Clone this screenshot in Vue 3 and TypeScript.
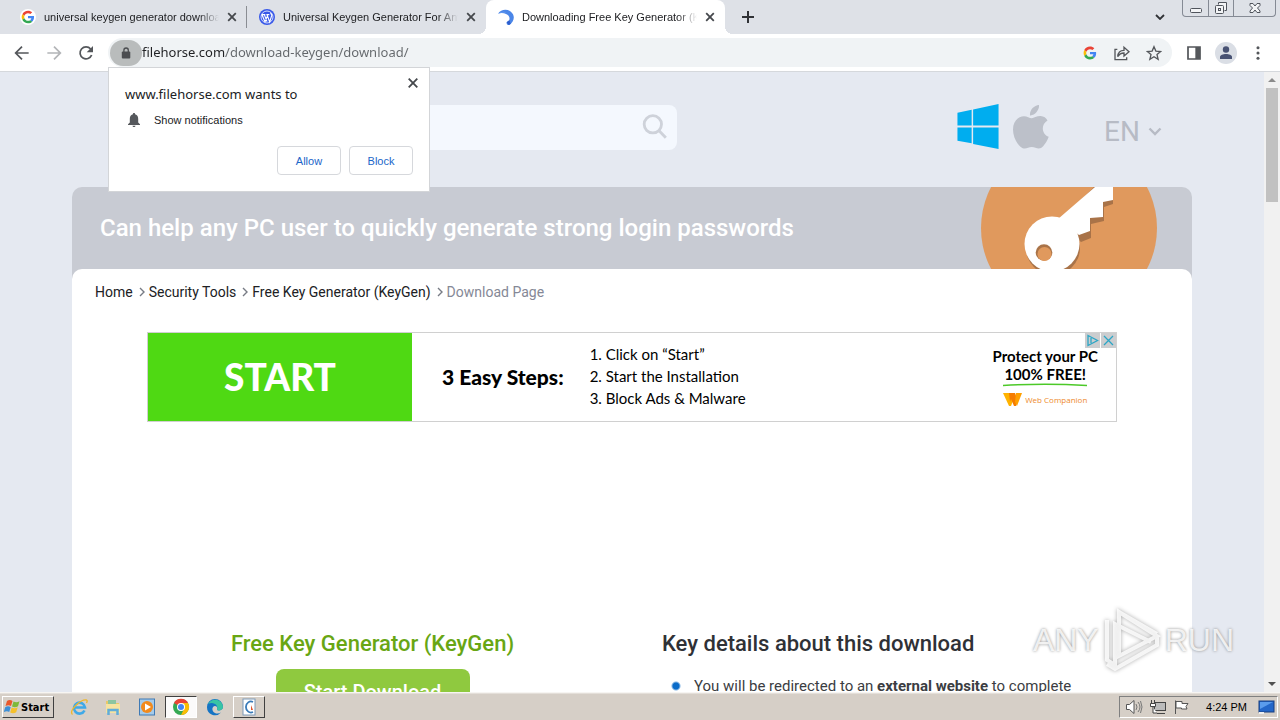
<script setup lang="ts">
import { ref } from 'vue'

interface Tab {
  title: string
  icon: 'google' | 'wordpress' | 'horse'
  active: boolean
}

const tabs: Tab[] = [
  { title: 'universal keygen generator download', icon: 'google', active: false },
  { title: 'Universal Keygen Generator For Any', icon: 'wordpress', active: false },
  { title: 'Downloading Free Key Generator (KeyGen)', icon: 'horse', active: true },
]

const crumbs: string[] = ['Home', 'Security Tools', 'Free Key Generator (KeyGen)']
const steps: string[] = ['1. Click on “Start”', '2. Start the Installation', '3. Block Ads & Malware']
const url = ref<string>('filehorse.com/download-keygen/download/')
const query = ref<string>('')
</script>

<template>
  <div class="desktop">
    <header class="tabstrip">
      <div v-for="tab in tabs" :key="tab.title" class="tab" :class="{ active: tab.active }">
        <svg v-if="tab.icon === 'google'" class="fav" viewBox="0 0 48 48" aria-hidden="true">
          <circle cx="24" cy="24" r="24" fill="#fff" />
          <g transform="translate(5 5) scale(.79)">
            <path fill="#ea4335" d="M24 9.5c3.5 0 6.700 1.200 9.200 3.600l6.900-6.900C35.900 2.400 30.500 0 24 0 14.600 0 6.500 5.400 2.600 13.200l8 6.200C12.400 13.700 17.700 9.500 24 9.500z" />
            <path fill="#4285f4" d="M47 24.500c0-1.600-.2-3.100-.4-4.500H24v9h12.900c-.6 3-2.300 5.500-4.800 7.200l7.700 6C44.400 38 47 31.800 47 24.500z" />
            <path fill="#fbbc05" d="M10.500 28.600c-.5-1.500-.8-3-.8-4.600s.3-3.100.8-4.600l-8-6.200C.9 16.500 0 20.100 0 24s.9 7.500 2.600 10.800z" />
            <path fill="#34a853" d="M24 48c6.500 0 11.900-2.100 15.900-5.800l-7.700-6c-2.200 1.500-4.900 2.300-8.200 2.300-6.300 0-11.600-4.200-13.500-9.900l-8 6.200C6.500 42.600 14.600 48 24 48z" />
          </g>
        </svg>
        <svg v-else-if="tab.icon === 'wordpress'" class="fav" viewBox="0 0 24 24" aria-hidden="true">
          <circle cx="12" cy="12" r="12" fill="#3858e9" />
          <circle cx="12" cy="12" r="9" fill="none" stroke="#fff" stroke-width="1.200" />
          <path d="M4.500 8.500l4.500 11M8 8.500l4 10.500M9 19.500l3-8M12 8.500l4 11 3-9.500c.4-2-1.500-2.500-1.500-4.500M4 8.500h5.500M11 8.500h4.500" fill="none" stroke="#fff" stroke-width="1.700" />
        </svg>
        <svg v-else class="fav" viewBox="0 0 24 24" aria-hidden="true">
          <path d="M0 7C5-1 18-1 22.500 8c3 6 0 12-5 16-3 .5-5-1-4.500-4 .6-2 3-1.500 4-4 1-4-1-7-5-8.500-3-1.500-7-2.500-12-.5z" fill="#4b86e8" />
          <path d="M1 7c3-3 8-4 12-2-4-.5-8 0-12 2z" fill="#7fb0f6" />
          <path d="M13 20l4-3 2 5-3 2z" fill="#2d5dcc" />
        </svg>
        <span class="tab-title">{{ tab.title }}</span>
        <button class="tab-close" aria-label="Close tab">
          <svg viewBox="0 0 10 10"><path d="M1.200 1.200l7.600 7.600M8.800 1.200L1.200 8.800" /></svg>
        </button>
      </div>
      <button class="new-tab" aria-label="New tab">
        <svg viewBox="0 0 12 12"><path d="M6 0v12M0 6h12" /></svg>
      </button>
      <div class="strip-space"></div>
      <button class="tab-search" aria-label="Search tabs">
        <svg viewBox="0 0 10 6"><path d="M1 1l4 4 4-4" /></svg>
      </button>
      <div class="win-controls">
        <button aria-label="Minimize">
          <svg viewBox="0 0 24 16"><rect x="6.500" y="8.500" width="11" height="4" rx="1" /></svg>
        </button>
        <button aria-label="Restore">
          <svg viewBox="0 0 24 16"><path d="M9.500 4.500v-2h8v8h-2" /><rect x="6.500" y="5.500" width="8" height="8" rx="1" /><rect x="9.500" y="8.500" width="2" height="2" /></svg>
        </button>
        <button class="wide" aria-label="Close window">
          <svg viewBox="0 0 24 16"><path d="M7 3.500h3l2 2.500 2-2.500h3v2L14.500 8l2.500 3v1.500h-3L12 10l-2 2.500H7V11l2.500-3L7 5.500z" /></svg>
        </button>
      </div>
    </header>

    <div class="toolbar">
      <button class="tool" aria-label="Back">
        <svg viewBox="0 0 24 24"><path d="M22 12H3M12 2.500L2.500 12l9.500 9.500" class="ln" /></svg>
      </button>
      <button class="tool faded" aria-label="Forward">
        <svg viewBox="0 0 24 24"><path d="M2 12h19M12 2.500l9.500 9.500-9.500 9.500" class="ln" /></svg>
      </button>
      <button class="tool" aria-label="Reload">
        <svg viewBox="0 0 24 24"><path d="M20.500 15a9 9 0 1 1-1.500-9" class="ln" /><path d="M22.500 1.500v9.500H13z" fill="currentColor" /></svg>
      </button>
      <div class="omnibox">
        <button class="lock" aria-label="Site information">
          <svg viewBox="0 0 10 12"><rect x=".8" y="4.500" width="8.500" height="7" rx="1" fill="#4b4d50" /><path d="M2.900 5V3.200a2.200 2.200 0 0 1 4.400 0V5" fill="none" stroke="#4b4d50" stroke-width="1.300" /></svg>
        </button>
        <input v-model="url" class="url" type="text" aria-label="Address" spellcheck="false" />
        <button class="tool" aria-label="Google">
          <svg viewBox="-6 -6 60 60">
            <path fill="#ea4335" d="M24 9.500c3.500 0 6.700 1.200 9.200 3.600l6.900-6.900C35.900 2.400 30.500 0 24 0 14.600 0 6.500 5.400 2.600 13.200l8 6.200C12.400 13.700 17.700 9.500 24 9.500z" />
            <path fill="#4285f4" d="M47 24.500c0-1.600-.2-3.100-.4-4.500H24v9h12.900c-.6 3-2.300 5.500-4.800 7.200l7.700 6C44.400 38 47 31.800 47 24.500z" />
            <path fill="#fbbc05" d="M10.500 28.600c-.5-1.500-.8-3-.8-4.600s.3-3.100.8-4.600l-8-6.200C.9 16.500 0 20.100 0 24s.9 7.500 2.600 10.800z" />
            <path fill="#34a853" d="M24 48c6.500 0 11.900-2.100 15.900-5.800l-7.700-6c-2.200 1.500-4.900 2.300-8.200 2.300-6.300 0-11.600-4.200-13.500-9.900l-8 6.200C6.500 42.600 14.600 48 24 48z" />
          </svg>
        </button>
        <button class="tool" aria-label="Share">
          <svg viewBox="0 0 24 24"><path d="M5 6.500H1.500V22H19v-3.500M5.500 17.500c.5-7 4-9.500 9.500-9.500V3.500l7.500 6.500-7.500 6.500V12c-4 0-7 1.500-9.500 5.500z" class="ln thin" /></svg>
        </button>
        <button class="tool" aria-label="Bookmark">
          <svg viewBox="0 0 24 24"><path d="M12 2.500l2.800 6.600 7.200.6-5.500 4.700 1.700 7-6.200-3.700-6.200 3.700 1.700-7L2 9.700l7.200-.6z" class="ln thin" /></svg>
        </button>
      </div>
      <button class="tool" aria-label="Side panel">
        <svg viewBox="0 0 24 24"><path d="M3 3h18v18H3z" class="ln" /><path d="M14 3h7v18h-7z" fill="currentColor" /></svg>
      </button>
      <button class="tool" aria-label="Profile">
        <svg class="avatar" viewBox="0 0 22 22"><circle cx="11" cy="11" r="11" fill="#dadee5" /><circle cx="11" cy="7.500" r="3.200" fill="#485273" /><path d="M5 17v-2c0-4 12-4 12 0v2z" fill="#485273" /></svg>
      </button>
      <button class="tool" aria-label="Menu">
        <svg viewBox="0 0 24 24"><g fill="currentColor"><circle cx="12" cy="4" r="2.300" /><circle cx="12" cy="12" r="2.300" /><circle cx="12" cy="20" r="2.300" /></g></svg>
      </button>
    </div>

    <section class="prompt" role="dialog" aria-label="Permission request">
      <button class="prompt-close" aria-label="Dismiss">
        <svg viewBox="0 0 10 10"><path d="M.7.7l8.600 8.600M9.300.7L.7 9.300" /></svg>
      </button>
      <h2>www.filehorse.com wants to</h2>
      <p>
        <svg viewBox="0 0 12 14" aria-hidden="true"><path d="M6 0c.8 0 1.100.5 1.100 1.200C9.500 1.800 10.200 4 10.200 6v3.500L12 11.300v.7H0v-.7l1.800-1.800V6c0-2 .7-4.200 3.100-4.800C4.900.5 5.200 0 6 0zM4.500 12.700h3c0 1.700-3 1.700-3 0z" fill="#55585c" /></svg>
        Show notifications
      </p>
      <div class="prompt-actions">
        <button>Allow</button>
        <button>Block</button>
      </div>
    </section>

    <div class="viewport">
      <main class="page">
        <div class="site">
          <div class="site-head">
            <form class="search" @submit.prevent>
              <input v-model="query" type="search" aria-label="Search" />
              <button aria-label="Search">
                <svg viewBox="0 0 24 24"><circle cx="10" cy="9.500" r="8" /><path d="M15.800 15.500L22 22" /></svg>
              </button>
            </form>
            <nav class="platforms" aria-label="Platforms">
              <a href="#windows" aria-label="Windows">
                <svg class="windows" viewBox="0 0 42 46"><path fill="#00adef" d="M0 9l14.500-3v16H0zM16 5.700L42 0v22H16zM0 24h14.500v16.200L0 37.500zM16 24h26v22l-26-5z" /></svg>
              </a>
              <a href="#mac" aria-label="Mac">
                <svg class="apple" viewBox="0 0 36 44"><path fill="#bcc0c9" d="M26 0c.3 3-1 5.500-2.600 7.300C21.800 9.100 19.500 10.600 17 10.400c-.3-2.900 1-5.500 2.600-7.300C21.200 1.400 23.800.2 26 0zM34.500 15.500c-7 4.300-5.800 13.500 1.200 16.300-1.300 4-4.900 9.800-7.700 11.300-3.400 1.400-5.800-1.100-9.300-1.100s-5.500 2.500-9 1.200C4 40.500 0 31.500 0 24.500 0 16 5.500 11.200 11 11.200c3.200 0 5.500 2 7.700 2 2.100 0 5.300-2.400 9-2.200 3 .2 5.500 1.800 6.800 4.500z" /></svg>
              </a>
            </nav>
            <button class="lang">EN <svg viewBox="0 0 14 9"><path d="M1.500 1.500L7 7l5.500-5.500" /></svg></button>
          </div>

          <div class="hero">
            <h1>Can help any PC user to quickly generate strong login passwords</h1>
            <svg class="key" viewBox="0 0 176 82" aria-hidden="true">
              <circle cx="88" cy="41" r="88" fill="#e0995d" />
              <g fill="#a97348">
                <path d="M78 35L115-2h17v19l-9 3v14l-13 3v14l-10 4z" />
                <circle cx="72" cy="61" r="27" />
              </g>
              <path fill="#fff" d="M77 32L114 0h18v13l-10 2v15l-13 1v13l-11 4z" />
              <circle cx="71" cy="57" r="27.500" fill="#fff" />
              <circle cx="63" cy="65.500" r="8.300" fill="#a97348" />
              <circle cx="63.500" cy="67" r="7" fill="#e0995d" />
            </svg>
          </div>

          <div class="card">
            <nav class="crumbs" aria-label="Breadcrumb">
              <template v-for="crumb in crumbs" :key="crumb">
                <a href="#crumb">{{ crumb }}</a>
                <svg viewBox="0 0 6 10" aria-hidden="true"><path d="M1 1l4 4-4 4" /></svg>
              </template>
              <span>Download Page</span>
            </nav>

            <aside class="ad">
              <a class="ad-start" href="#start">START</a>
              <strong class="ad-lead">3 Easy Steps:</strong>
              <ul>
                <li v-for="step in steps" :key="step">{{ step }}</li>
              </ul>
              <div class="ad-brand">
                <b>Protect your PC</b>
                <b>100% FREE!</b>
                <svg class="swash" viewBox="0 0 84 4" aria-hidden="true"><path d="M0 2.500Q42 0 84 2.500" fill="none" stroke="#4cc928" stroke-width="1.500" /></svg>
                <span class="wc">
                  <svg viewBox="0 0 19 14" aria-hidden="true"><path fill="#ffb300" d="M0 0h9l2 5-3 8H6z" /><path fill="#f57c00" d="M6 0h6l3 8-2 5h-2L8 6 7 9z" /><path fill="#ffa000" d="M13 0h6l-5 13-2-4z" /></svg>
                  Web Companion
                </span>
              </div>
              <div class="ad-tools">
                <button aria-label="Ad choices"><svg viewBox="0 0 15 15"><path d="M3 2.500l9.500 5L3 12.500zM6 5v5" /></svg></button>
                <button aria-label="Close ad"><svg viewBox="0 0 15 15"><path d="M3 3l9 9M12 3l-9 9" /></svg></button>
              </div>
            </aside>

            <div class="columns">
              <section class="get">
                <h2>Free Key Generator (KeyGen)</h2>
                <button>Start Download</button>
              </section>
              <section class="details">
                <h2>Key details about this download</h2>
                <ul>
                  <li>You will be redirected to an <b>external website</b> to complete</li>
                </ul>
              </section>
            </div>
          </div>
        </div>
      </main>
      <div class="scrollbar" aria-hidden="true">
        <svg viewBox="0 0 16 16"><path d="M4 10l4-4 4 4z" fill="#8b8b8b" /></svg>
        <div class="thumb"></div>
        <svg viewBox="0 0 16 16"><path d="M4 6l4 4 4-4z" fill="#505050" /></svg>
      </div>
      <div class="watermark">
        <span>ANY</span>
        <svg viewBox="0 0 58 64" aria-hidden="true"><path d="M4 12v40l8 5V16l36 18M16 4v44l38-20zM4 56l8 5 42-24v-8M16 4l38 22" /></svg>
        <span>RUN</span>
      </div>
    </div>

    <footer class="taskbar">
      <button class="start">
        <svg viewBox="0 0 16 16" aria-hidden="true"><path fill="#e9582b" d="M3 2c2-1.500 4-1 5.500 0L7 7C5.500 6 3.500 6 1.500 7z" /><path fill="#7db93a" d="M9.500 2.500c2 1 4 1 6-.2L14 7.200c-2 1.200-4 1.200-6 .2z" /><path fill="#3d8fd6" d="M1.200 8.200c2-1.200 4-1 5.500 0L5.200 13C3.700 12 2 12-.2 13z" /><path fill="#f5c02b" d="M7.700 8.500c2 1 4 1 6-.2l-1.500 5c-2 1.200-4 1.200-6 .2z" /></svg>
        Start
      </button>
      <button class="task" aria-label="Internet Explorer">
        <svg viewBox="0 0 18 18"><path d="M14.500 12.500A5.500 5.500 0 1 1 15 9.500H4.500" fill="none" stroke="#3fa9e8" stroke-width="2.600" /><path d="M2.500 16.500C-2 13 11 1 16.500 2c1.500.5 0 3 0 3" fill="none" stroke="#efb72b" stroke-width="1.300" /></svg>
      </button>
      <button class="task" aria-label="Explorer">
        <svg viewBox="0 0 18 18"><path d="M2 3h6l1 2h6v10H2z" fill="#e9c868" /><path d="M4 2h8v5H4z" fill="#8bc5a0" /><path d="M2 6h14v9H2z" fill="#f6e3a0" /><path d="M4.500 17v-5h9v5" fill="none" stroke="#61add8" stroke-width="2.500" /></svg>
      </button>
      <button class="task" aria-label="Media Player">
        <svg viewBox="0 0 18 18"><rect x="1.500" y="1" width="15" height="16" fill="#a5cbea" stroke="#3f7ab5" /><circle cx="9" cy="9" r="6" fill="#f28a1c" /><path d="M7 5.500l6 3.500-6 3.500z" fill="#fff" /></svg>
      </button>
      <button class="task pressed" aria-label="Chrome">
        <svg viewBox="0 0 18 18"><circle cx="9" cy="9" r="8" fill="#34a853" /><path d="M9 9L2 5a8 8 0 0 1 14 0z" fill="#ea4335" /><path d="M9 5h7a8 8 0 0 1-7 12l3-6z" fill="#fbbc05" /><circle cx="9" cy="9" r="4" fill="#fff" /><circle cx="9" cy="9" r="3" fill="#4285f4" /></svg>
      </button>
      <button class="task" aria-label="Edge">
        <svg viewBox="0 0 18 18"><path d="M1 9a8 8 0 0 1 16 0c0 3-4 4-6 3 1-2 0-4-2-4-3 0-4 5 0 7 2 1 4 .5 6-.5A8 8 0 0 1 1 9z" fill="#1574c4" /><path d="M2 6c3-6 14-6 15 3 0 3-4 4-6 3 2-4-3-9-9-6z" fill="#38c4a4" /></svg>
      </button>
      <button class="task raised" aria-label="Keygen">
        <svg viewBox="0 0 18 18"><rect x="3" y="1" width="12" height="16" fill="#fff" stroke="#7d9ab8" /><path d="M13 4a5 5.500 0 1 0 0 10" fill="none" stroke="#3a7bb8" stroke-width="1.800" /><path d="M11 7l2 5h-2z" fill="#e0552b" /></svg>
      </button>
      <div class="tray">
        <svg viewBox="0 0 18 16" aria-hidden="true"><path d="M1.500 5.500h3L9 1.500v13l-4.500-4h-3z" fill="#fff" stroke="#555" /><path d="M11 5q2 3 0 6M13 3q4 5 0 10M15.500 2q3 6 0 12" fill="none" stroke="#777" /></svg>
        <svg viewBox="0 0 18 16" aria-hidden="true"><rect x="5.500" y="3.500" width="11" height="8" fill="#bbb" stroke="#444" /><path d="M8 14.500h8M2.500 1v4M5.500 1v4M1.500 4.500h5v3h-5zM4 8v6h4" fill="#fff" stroke="#444" /></svg>
        <svg viewBox="0 0 18 16" aria-hidden="true"><path d="M2.500 15V1.500M3 2.500h6v2h6l-2 3 1 2.500H8.500V9H3z" fill="#fff" stroke="#555" /></svg>
        <time>4:24 PM</time>
        <svg viewBox="0 0 18 16" aria-hidden="true"><rect x="2" y="2" width="15" height="11" fill="#2467c9" stroke="#173f80" /><path d="M3 3h13L3 10z" fill="#5b9cec" /><path d="M2 14h5" stroke="#eee" stroke-width="2" /></svg>
      </div>
    </footer>
  </div>
</template>

<style>
html,
body {
  margin: 0;
  overflow: hidden;
}
</style>

<style scoped>
* {
  box-sizing: border-box;
}
.desktop {
  position: relative;
  display: flex;
  flex-direction: column;
  height: 100vh;
  background: #fff;
  font-family: "Liberation Sans", Arial, sans-serif;
  color: #202124;
}
button {
  margin: 0;
  padding: 0;
  border: 0;
  background: none;
  font: inherit;
  color: inherit;
}
a {
  color: inherit;
  text-decoration: none;
}
h1,
h2,
p,
ul {
  margin: 0;
  padding: 0;
  list-style: none;
}
svg {
  display: block;
  flex: none;
}

/* Tab strip */
.tabstrip {
  display: flex;
  flex: none;
  height: 34px;
  padding: 0 4px 0 8px;
  background: #dee1e7;
}
.tab {
  position: relative;
  display: flex;
  align-items: center;
  width: 239px;
  padding: 0 7px 0 12px;
  font-size: 11px;
  line-height: 16px;
}
.tab:first-child {
  padding-right: 6px;
  border-right: 1px solid #8a8d93;
  border-image: linear-gradient(transparent 7px, #8a8d93 7px 27px, transparent 27px) 1;
}
.tab.active {
  border-radius: 8px 8px 0 0;
  background: #fff;
}
.tab.active::before,
.tab.active::after {
  content: "";
  position: absolute;
  bottom: 0;
  width: 8px;
  height: 8px;
}
.tab.active::before {
  left: -8px;
  background: radial-gradient(circle at 0 0, transparent 8px, #fff 8px);
}
.tab.active::after {
  right: -8px;
  background: radial-gradient(circle at 100% 0, transparent 8px, #fff 8px);
}
.fav {
  width: 16px;
  height: 16px;
}
.tab-title {
  flex: 1;
  min-width: 0;
  margin: 0 5px 0 8px;
  overflow: hidden;
  white-space: nowrap;
  mask-image: linear-gradient(to right, #000 calc(100% - 20px), transparent);
}
.tab-close {
  display: flex;
  align-items: center;
  justify-content: center;
  width: 16px;
  height: 16px;
}
.tab-close svg,
.prompt-close svg {
  width: 10px;
  height: 10px;
  stroke: #45484c;
  stroke-width: 1.8;
}
.new-tab {
  width: 28px;
  margin-left: 9px;
}
.new-tab svg {
  width: 12px;
  height: 12px;
  margin: 0 auto;
  stroke: #303236;
  stroke-width: 2;
}
.strip-space {
  flex: 1;
}
.tab-search {
  width: 24px;
  margin-right: 10px;
}
.tab-search svg {
  width: 10px;
  height: 6px;
  margin: 0 auto;
  fill: none;
  stroke: #303236;
  stroke-width: 1.8;
}
.win-controls {
  display: flex;
  height: 17px;
  border: 1px solid #858a94;
  border-top: 0;
  border-radius: 0 0 4px 4px;
}
.win-controls button {
  width: 25px;
}
.win-controls .wide {
  width: 42px;
}
.win-controls button + button {
  border-left: 1px solid #858a94;
}
.win-controls svg {
  width: 24px;
  height: 16px;
  margin: 0 auto;
  fill: #f3f4f6;
  stroke: #50545c;
}

/* Toolbar */
.toolbar {
  display: flex;
  align-items: center;
  flex: none;
  height: 38px;
  padding: 0 6px;
  border-bottom: 1px solid #d5d8dc;
  background: #fff;
}
.tool {
  display: flex;
  align-items: center;
  justify-content: center;
  flex: none;
  width: 32px;
  height: 28px;
  color: #54575b;
}
.tool svg {
  width: 16px;
  height: 16px;
}
.tool .avatar {
  width: 22px;
  height: 22px;
}
.faded {
  color: #b3b5b8;
}
.ln {
  fill: none;
  stroke: currentColor;
  stroke-width: 2.6;
}
.thin {
  stroke-width: 2;
}
.omnibox {
  display: flex;
  align-items: center;
  flex: 1;
  height: 29px;
  margin: 0 6px;
  padding: 0 2px;
  border-radius: 15px;
  background: #f0f3f5;
}
.lock {
  display: flex;
  align-items: center;
  justify-content: center;
  width: 32px;
  height: 26px;
  border-radius: 13px;
  background: #b9bcbc;
}
.lock svg {
  width: 10px;
  height: 12px;
}
.url {
  flex: 1;
  min-width: 0;
  padding: 0 0 2px;
  border: 0;
  outline: 0;
  background: linear-gradient(to right, #202124 83px, #63676b 83px) text;
  color: transparent;
  font: 13px/20px "Noto Sans", sans-serif;
}

/* Permission prompt, floating over the page */
.prompt {
  position: absolute;
  z-index: 5;
  top: 67px;
  left: 108px;
  width: 322px;
  padding: 16px;
  border: 1px solid #d3d5d8;
  background: #fff;
}
.prompt-close {
  position: absolute;
  top: 10px;
  right: 11px;
}
.prompt h2 {
  font: 400 13px/20px "Noto Sans", sans-serif;
}
.prompt p {
  display: flex;
  align-items: center;
  gap: 14px;
  margin: 7px 0 17px 3px;
  font-size: 11px;
  line-height: 18px;
}
.prompt p svg {
  width: 12px;
  height: 14px;
}
.prompt-actions {
  display: flex;
  justify-content: flex-end;
  gap: 8px;
}
.prompt-actions button {
  width: 64px;
  height: 29px;
  border: 1px solid #d6d8dc;
  border-radius: 4px;
  color: #1b66c9;
  font-size: 11px;
}

/* Page */
.viewport {
  position: relative;
  display: flex;
  flex: 1;
  min-height: 0;
  overflow: hidden;
}
.page {
  flex: 1;
  min-width: 0;
  overflow: hidden;
  background: #e5e9f1;
  font-family: Roboto, sans-serif;
}
.site {
  max-width: 1120px;
  margin: 0 auto;
}
.site-head {
  display: flex;
  align-items: center;
  height: 115px;
  padding: 0 30px 4px 248px;
}
.search {
  display: flex;
  align-items: center;
  width: 357px;
  height: 45px;
  padding: 0 9px 2px 16px;
  border-radius: 8px;
  background: #f4f8fe;
}
.search input {
  flex: 1;
  min-width: 0;
  border: 0;
  outline: 0;
  background: none;
  font: 16px Roboto, sans-serif;
}
.search svg {
  width: 26px;
  height: 26px;
  fill: none;
  stroke: #ced2da;
  stroke-width: 2.6;
}
.platforms {
  display: flex;
  align-items: center;
  gap: 14px;
  margin: 0 55px 0 auto;
  padding-bottom: 2px;
}
.windows {
  width: 42px;
  height: 45px;
}
.apple {
  width: 36px;
  height: 44px;
}
.lang {
  display: flex;
  align-items: center;
  gap: 8px;
  padding-top: 8px;
  color: #b7bbc5;
  font-size: 28px;
  line-height: 32px;
}
.lang svg {
  width: 14px;
  height: 9px;
  fill: none;
  stroke: currentColor;
  stroke-width: 2.4;
}
.hero {
  display: flex;
  align-items: flex-start;
  justify-content: space-between;
  height: 92px;
  padding: 0 35px 0 28px;
  border-radius: 10px 10px 0 0;
  background: #c8cbd3;
}
.hero h1 {
  color: #fff;
  font-size: 24px;
  font-weight: 500;
  line-height: 82px;
}
.key {
  width: 176px;
  height: 82px;
}
.card {
  position: relative;
  margin-top: -10px;
  padding: 13px 23px 40px;
  border-radius: 10px 10px 0 0;
  background: #fff;
}
.crumbs {
  display: flex;
  align-items: center;
  font-size: 14px;
  line-height: 20px;
}
.crumbs svg {
  width: 6px;
  height: 10px;
  margin: 0 4px 0 6px;
  fill: none;
  stroke: #777b85;
  stroke-width: 1.4;
}
.crumbs span {
  color: #858896;
}
.ad {
  position: relative;
  display: flex;
  align-items: center;
  width: 970px;
  max-width: 100%;
  height: 90px;
  margin: 30px auto 0;
  border: 1px solid #d0d0d0;
  color: #000;
  font-family: Lato, sans-serif;
}
.ad-start {
  width: 264px;
  background: #4fd913;
  color: #fff;
  font-size: 37px;
  font-weight: 900;
  line-height: 88px;
  text-align: center;
}
.ad-lead {
  margin: 0 26px 0 30px;
  font-size: 21px;
  font-weight: 900;
  line-height: 24px;
}
.ad ul {
  padding-bottom: 2px;
  font-size: 15px;
  line-height: 22px;
}
.ad-brand {
  display: flex;
  flex-direction: column;
  align-items: center;
  margin: 0 18px 0 auto;
  font-size: 15px;
  line-height: 18px;
}
.ad-brand b {
  font-weight: 700;
}
.swash {
  width: 84px;
  height: 4px;
}
.wc {
  display: flex;
  align-items: center;
  gap: 3px;
  margin-top: 6px;
  color: #ee8a2c;
  font: 8px/14px "Open Sans", sans-serif;
}
.wc svg {
  width: 19px;
  height: 14px;
}
.ad-tools {
  position: absolute;
  top: 0;
  right: 0;
  display: flex;
  gap: 1px;
}
.ad-tools button {
  background: #cbcdcf;
}
.ad-tools svg {
  width: 15px;
  height: 15px;
  fill: none;
  stroke: #2ba6c6;
  stroke-width: 1.3;
}
.columns {
  display: grid;
  grid-template-columns: 555px 1fr;
  gap: 12px;
  padding-top: 208px;
}
.columns h2 {
  font-size: 22px;
  font-weight: 500;
  line-height: 28px;
}
.get {
  text-align: center;
}
.get h2 {
  color: #68a614;
}
.get button {
  width: 194px;
  height: 46px;
  margin-top: 11px;
  border-radius: 8px;
  background: #8fc93f;
  color: #fff;
  font-size: 20px;
  font-weight: 500;
}
.details h2 {
  color: #2f3136;
}
.details ul {
  margin-top: 17px;
  font-size: 15px;
  line-height: 22px;
}
.details li {
  display: block;
  padding-left: 32px;
  background: radial-gradient(circle at 14px 11px, #0b6cc9 3px, transparent 5px);
  color: #3b3d42;
}
.scrollbar {
  display: flex;
  flex-direction: column;
  width: 16px;
  background: #f1f1f1;
}
.scrollbar svg {
  width: 16px;
  height: 16px;
}
.thumb {
  width: 12px;
  height: 114px;
  margin: 0 auto auto;
  background: #c1c1c1;
}
.watermark {
  position: absolute;
  right: 46px;
  bottom: 20px;
  display: flex;
  align-items: center;
  gap: 4px;
  color: #ffffffd0;
  font: 32px/64px "Liberation Sans", sans-serif;
  text-shadow: 0 0 3px #8c8c8c;
}
.watermark svg {
  width: 58px;
  height: 64px;
  fill: none;
  stroke: #ffffffd0;
  stroke-width: 4;
  filter: drop-shadow(0 0 2px #999);
}

/* Taskbar */
.taskbar {
  display: flex;
  align-items: center;
  flex: none;
  height: 28px;
  padding: 1px 2px 0;
  border-top: 1px solid #f7f5f2;
  background: #d6cfc7;
  box-shadow: inset 0 1px #e4dfd9;
}
.start {
  display: flex;
  align-items: center;
  gap: 1px;
  width: 52px;
  height: 22px;
  margin-right: 9px;
  padding: 0 1px;
  border: 1px solid;
  border-color: #fff #404040 #404040 #fff;
  color: #000;
  font: bold 11px "DejaVu Sans Condensed", sans-serif;
}
.start svg {
  width: 16px;
  height: 16px;
}
.task {
  display: flex;
  align-items: center;
  justify-content: center;
  width: 32px;
  height: 22px;
  margin-right: 2px;
  border: 1px solid transparent;
}
.task svg {
  width: 18px;
  height: 18px;
}
.pressed {
  border-color: #404040 #fff #fff #404040;
  background: #fbfafa;
}
.raised {
  border-color: #fff #404040 #404040 #fff;
}
.tray {
  display: flex;
  align-items: center;
  gap: 6px;
  height: 22px;
  margin-left: auto;
  padding: 0 2px 0 5px;
  border: 1px solid;
  border-color: #808080 #fff #fff #808080;
  color: #000;
  font-size: 11px;
}
.tray svg {
  width: 18px;
  height: 16px;
}
.tray time {
  margin: 0 4px 0 9px;
}
</style>
